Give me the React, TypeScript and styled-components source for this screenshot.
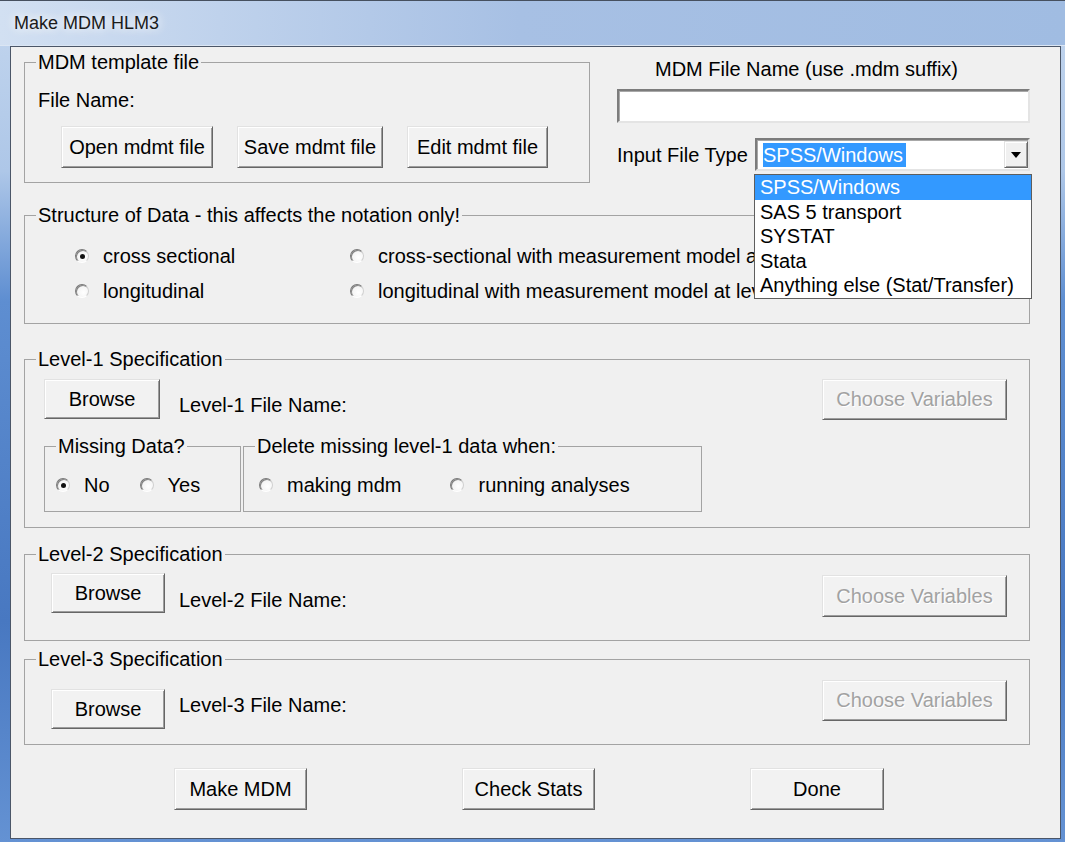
import React from "react";
import styled, { createGlobalStyle } from "styled-components";

const GlobalStyle = createGlobalStyle`
  html, body {
    margin: 0;
    padding: 0;
  }
  body {
    width: 1065px;
    height: 842px;
    overflow: hidden;
    font-family: "Liberation Sans", Arial, sans-serif;
    background: #4a7bc3;
  }
  * {
    box-sizing: border-box;
  }
`;

const Window = styled.div`
  width: 1065px;
  height: 842px;
  display: flex;
  flex-direction: column;
  border-top: 1px solid #46505f;
  background: linear-gradient(
    180deg,
    #c3d6ee 0px,
    #aec7e8 170px,
    #5e8ed1 300px,
    #4878c1 620px,
    #6492d3 100%
  );
`;

const TitleBar = styled.div`
  flex: none;
  height: 45px;
  display: flex;
  align-items: center;
  padding-left: 14px;
  border-bottom: 1px solid #dbe6f4;
  background: linear-gradient(90deg, #d2e0f2 0px, #bfd2ec 220px, #a7c0e4 520px, #a0bce2 100%);
`;

const Caption = styled.span`
  font-size: 18px;
  color: #1b1b1b;
  text-shadow: 0 0 8px rgba(255, 255, 255, 0.95), 0 0 14px rgba(255, 255, 255, 0.7);
`;

const Frame = styled.div`
  flex: 1;
  display: flex;
  padding: 0 4px 3px 10px;
  min-height: 0;
`;

const Client = styled.div`
  flex: 1;
  display: flex;
  flex-direction: column;
  padding: 4px 30px 0 13px;
  background: #f0f0f0;
  border: 1px solid #4b5668;
  color: #000;
  font-size: 20px;
`;

const TopRow = styled.div`
  display: flex;
  align-items: flex-start;
`;

const Group = styled.fieldset<{ $w?: number; $mt?: number }>`
  margin: ${(p) => p.$mt ?? 0}px 0 0 0;
  padding: 0;
  min-width: 0;
  width: ${(p) => (p.$w ? `${p.$w}px` : "auto")};
  border: 1px solid #a3a3a3;
`;

const Legend = styled.legend`
  margin-left: 11px;
  padding: 0 2px;
  font-size: 20px;
  line-height: 22px;
  white-space: nowrap;
`;

const GroupBody = styled.div<{ $pad: string }>`
  padding: ${(p) => p.$pad};
`;

const Text = styled.div<{ $ml?: number; $mt?: number }>`
  margin: ${(p) => p.$mt ?? 0}px 0 0 ${(p) => p.$ml ?? 0}px;
  line-height: 22px;
  white-space: nowrap;
`;

const ButtonRow = styled.div<{ $gap: number; $pl: number; $mt?: number }>`
  display: flex;
  gap: ${(p) => p.$gap}px;
  padding-left: ${(p) => p.$pl}px;
  margin-top: ${(p) => p.$mt ?? 0}px;
`;

const Button = styled.button<{ $w: number; $h?: number; $mt?: number }>`
  flex: none;
  width: ${(p) => p.$w}px;
  height: ${(p) => p.$h ?? 42}px;
  margin: ${(p) => p.$mt ?? 0}px 0 0 0;
  padding: 0;
  font-family: inherit;
  font-size: 20px;
  color: #000;
  background: #f2f2f2;
  border: 1px solid;
  border-color: #e2e2e2 #666 #666 #e2e2e2;
  box-shadow: inset 1px 1px 0 #fff, inset -1px -1px 0 #9d9d9d;
  white-space: nowrap;

  &:disabled {
    color: #a2a2a2;
    text-shadow: 1px 1px 0 #fff;
  }
`;

/* right column: mdm file name + file type combo */
const FileColumn = styled.div`
  position: relative;
  width: 413px;
  margin-left: 27px;
  display: flex;
  flex-direction: column;
`;

const Sunken = styled.div<{ $w?: number; $h: number }>`
  width: ${(p) => (p.$w ? `${p.$w}px` : "100%")};
  height: ${(p) => p.$h}px;
  background: #fff;
  border: 2px solid;
  border-color: #7c7c7c #e4e4e4 #e4e4e4 #7c7c7c;
  box-shadow: inset 1px 1px 0 #a8a8a8;
`;

const NameInput = styled(Sunken)`
  margin-top: 9px;
`;

const ComboRow = styled.div`
  margin-top: 15px;
  display: flex;
  align-items: center;
  justify-content: space-between;
  height: 33px;
`;

const Combo = styled(Sunken)`
  display: flex;
  align-items: center;
  padding: 1px 0 1px 6px;
`;

const Selected = styled.span`
  background: #3399ff;
  color: #fff;
  line-height: 24px;
  padding-right: 3px;
  white-space: nowrap;
`;

const DropButton = styled.div`
  margin-left: auto;
  width: 24px;
  height: 100%;
  display: flex;
  align-items: center;
  justify-content: center;
  background: #f0f0f0;
  border: 1px solid;
  border-color: #e2e2e2 #666 #666 #e2e2e2;
  box-shadow: inset 1px 1px 0 #fff, inset -1px -1px 0 #9d9d9d;
`;

const DropList = styled.ul`
  position: absolute;
  z-index: 2;
  top: 123px;
  left: 137px;
  width: 278px;
  margin: 0;
  padding: 0;
  list-style: none;
  background: #fff;
  border: 1px solid #5e5e5e;
`;

const DropItem = styled.li<{ $active?: boolean }>`
  height: 24.6px;
  line-height: 24.6px;
  padding-left: 5px;
  white-space: nowrap;
  background: ${(p) => (p.$active ? "#3399ff" : "transparent")};
  color: ${(p) => (p.$active ? "#fff" : "#000")};
`;

/* radio buttons */
const RadioGrid = styled.div`
  display: grid;
  grid-template-columns: 275px 1fr;
  row-gap: 13px;
`;

const RadioRow = styled.div<{ $pl: number; $gap: number }>`
  display: flex;
  gap: ${(p) => p.$gap}px;
  padding-left: ${(p) => p.$pl}px;
`;

const RadioItem = styled.label`
  display: inline-flex;
  align-items: center;
  gap: 14px;
  line-height: 22px;
  white-space: nowrap;
`;

const RadioDot = styled.span<{ $on?: boolean }>`
  flex: none;
  position: relative;
  width: 14px;
  height: 14px;
  border-radius: 50%;
  background: radial-gradient(circle at 62% 62%, #ffffff 0%, #f5f5f5 55%, #dedede 100%);
  border: 1px solid;
  border-color: #7a7a7a #d0d0d0 #ffffff #7a7a7a;
  box-shadow: inset 1px 1px 0 rgba(60, 60, 60, 0.6);

  &::after {
    content: "";
    display: ${(p) => (p.$on ? "block" : "none")};
    position: absolute;
    left: 4px;
    top: 4px;
    width: 5px;
    height: 5px;
    border-radius: 50%;
    background: #111;
  }
`;

const SubGroups = styled.div`
  display: flex;
  gap: 2px;
  margin-top: 15px;
  padding-left: 19px;
`;

const SpecRow = styled.div`
  display: flex;
  align-items: flex-start;
`;

const BrowseSlot = styled.div<{ $pl: number }>`
  flex: none;
  width: 154px;
  padding-left: ${(p) => p.$pl}px;
`;

const Radio = ({ label, on }: { label: string; on?: boolean }) => (
  <RadioItem>
    <RadioDot $on={on} />
    {label}
  </RadioItem>
);

type SpecProps = {
  level: number;
  mt: number;
  pad: string;
  browseLeft: number;
  browseW: number;
  browseTop: number;
  labelTop: number;
  chooseTop: number;
  chooseH: number;
  children?: React.ReactNode;
};

const Spec = (p: SpecProps) => (
  <Group $mt={p.mt}>
    <Legend>Level-{p.level} Specification</Legend>
    <GroupBody $pad={p.pad}>
      <SpecRow>
        <BrowseSlot $pl={p.browseLeft}>
          <Button $w={p.browseW} $h={40} $mt={p.browseTop}>
            Browse
          </Button>
        </BrowseSlot>
        <Text $mt={p.labelTop}>Level-{p.level} File Name:</Text>
        <Button
          $w={185}
          $h={p.chooseH}
          $mt={p.chooseTop}
          style={{ marginLeft: "auto" }}
          disabled
        >
          Choose Variables
        </Button>
      </SpecRow>
      {p.children}
    </GroupBody>
  </Group>
);

const fileTypes = [
  "SPSS/Windows",
  "SAS 5 transport",
  "SYSTAT",
  "Stata",
  "Anything else (Stat/Transfer)",
];

const App = () => {
  return (
    <>
      <GlobalStyle />
      <Window>
        <TitleBar>
          <Caption>Make MDM HLM3</Caption>
        </TitleBar>
        <Frame>
          <Client>
            <TopRow>
              <Group $w={566}>
                <Legend>MDM template file</Legend>
                <GroupBody $pad="16px 0 14px 0">
                  <Text $ml={13}>File Name:</Text>
                  <ButtonRow $gap={24} $pl={36} $mt={15}>
                    <Button $w={152}>Open mdmt file</Button>
                    <Button $w={146}>Save mdmt file</Button>
                    <Button $w={141}>Edit mdmt file</Button>
                  </ButtonRow>
                </GroupBody>
              </Group>

              <FileColumn>
                <Text $ml={38} $mt={7}>
                  MDM File Name (use .mdm suffix)
                </Text>
                <NameInput $h={34} />
                <ComboRow>
                  <Text>Input File Type</Text>
                  <Combo $w={275} $h={33}>
                    <Selected>SPSS/Windows</Selected>
                    <DropButton>
                      <svg width="10" height="6" viewBox="0 0 10 6">
                        <path d="M0 0h10L5 6z" fill="#000" />
                      </svg>
                    </DropButton>
                  </Combo>
                </ComboRow>
                <DropList>
                  {fileTypes.map((t, i) => (
                    <DropItem key={t} $active={i === 0}>
                      {t}
                    </DropItem>
                  ))}
                </DropList>
              </FileColumn>
            </TopRow>

            <Group $mt={21}>
              <Legend>Structure of Data - this affects the notation only!</Legend>
              <GroupBody $pad="19px 0 21px 50px">
                <RadioGrid>
                  <Radio label="cross sectional" on />
                  <Radio label="cross-sectional with measurement model at level-1" />
                  <Radio label="longitudinal" />
                  <Radio label="longitudinal with measurement model at level-1" />
                </RadioGrid>
              </GroupBody>
            </Group>

            <Spec
              level={1}
              mt={24}
              pad="9px 22px 15px 0"
              browseLeft={19}
              browseW={116}
              browseTop={0}
              labelTop={15}
              chooseTop={0}
              chooseH={41}
            >
              <SubGroups>
                <Group $w={197}>
                  <Legend>Missing Data?</Legend>
                  <GroupBody $pad="17px 0 15px 0">
                    <RadioRow $pl={11} $gap={30}>
                      <Radio label="No" on />
                      <Radio label="Yes" />
                    </RadioRow>
                  </GroupBody>
                </Group>
                <Group $w={459}>
                  <Legend>Delete missing level-1 data when:</Legend>
                  <GroupBody $pad="17px 0 15px 0">
                    <RadioRow $pl={15} $gap={49}>
                      <Radio label="making mdm" />
                      <Radio label="running analyses" />
                    </RadioRow>
                  </GroupBody>
                </Group>
              </SubGroups>
            </Spec>

            <Spec
              level={2}
              mt={15}
              pad="8px 22px 23px 0"
              browseLeft={26}
              browseW={114}
              browseTop={0}
              labelTop={16}
              chooseTop={2}
              chooseH={42}
            />

            <Spec
              level={3}
              mt={7}
              pad="10px 22px 15px 0"
              browseLeft={26}
              browseW={114}
              browseTop={9}
              labelTop={14}
              chooseTop={0}
              chooseH={41}
            />

            <ButtonRow $gap={155} $pl={150} $mt={23}>
              <Button $w={133}>Make MDM</Button>
              <Button $w={133}>Check Stats</Button>
              <Button $w={134}>Done</Button>
            </ButtonRow>
          </Client>
        </Frame>
      </Window>
    </>
  );
};

export default App;
